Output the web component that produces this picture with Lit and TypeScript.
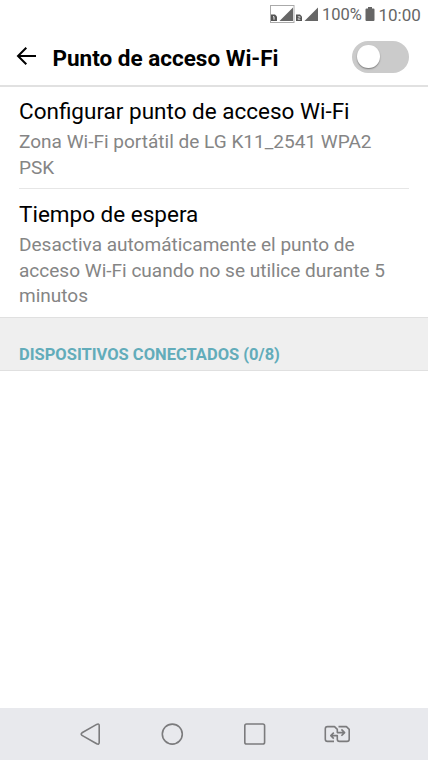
import { LitElement, html, css, svg } from 'lit';
import { customElement, property } from 'lit/decorators.js';

@customElement('status-bar')
export class StatusBar extends LitElement {
  @property({ type: String }) battery = '100%';
  @property({ type: String }) time = '10:00';

  static styles = css`
    :host {
      display: flex;
      height: 30px;
      color: #666;
      font-size: 16.5px;
      line-height: 30px;
    }

    .signals {
      display: block;
      margin-left: 269px;
      width: 50px;
      height: 30px;
    }

    .percent {
      width: 39px;
      margin-left: 3px;
      white-space: nowrap;
    }

    .battery {
      display: block;
      width: 10px;
      height: 30px;
      margin-left: 4px;
    }

    .time {
      margin-left: 3.5px;
      font-size: 17px;
    }
  `;

  signal(x: number, sim: string) {
    return svg`
      <path d="M${x + 8.5} 21 L${x + 22} 7.5 V21 Z" fill="#666" />
      <path d="M${x} 21 V14.5 H${x + 4} L${x + 6} 16.5 V21 Z" fill="#555" />
      ${sim === '1'
        ? svg`<path d="M${x + 2} 16.7 h1 v3" fill="none" stroke="#eee" stroke-width="1" />`
        : svg`<path d="M${x + 1.8} 16.5 h2.2 v1.5 h-1.8 v1.5 h2.2" fill="none" stroke="#ddd" stroke-width=".7" />`}
    `;
  }

  render() {
    return html`
      <svg class="signals" viewBox="269 0 50 30">
        <rect x="270.5" y="5.5" width="23.5" height="17" fill="#fff" stroke="#aaa" />
        ${this.signal(271, '1')}
        ${this.signal(296, '2')}
      </svg>
      <span class="percent">${this.battery}</span>
      <svg class="battery" viewBox="0 0 10 30">
        <path d="M3 7 H7 V8.5 H8.5 Q9.5 8.5 9.5 9.5 V20 Q9.5 21 8.5 21 H1.5 Q.5 21 .5 20 V9.5 Q.5 8.5 1.5 8.5 H3 Z" fill="#666" />
      </svg>
      <span class="time">${this.time}</span>
    `;
  }
}

@customElement('toggle-switch')
export class ToggleSwitch extends LitElement {
  @property({ type: Boolean, reflect: true }) checked = false;

  static styles = css`
    :host {
      display: flex;
      align-items: center;
      box-sizing: border-box;
      width: 57px;
      height: 32px;
      padding: 0 5px;
      border-radius: 16px;
      background: #cbcbcb;
    }

    :host([checked]) {
      justify-content: flex-end;
      background: #5fadbb;
    }

    .thumb {
      width: 22.5px;
      height: 22.5px;
      border-radius: 50%;
      background: #fff;
      box-shadow: 0 1px 1.5px rgba(0, 0, 0, 0.4);
    }
  `;

  render() {
    return html`<div class="thumb"></div>`;
  }
}

@customElement('setting-row')
export class SettingRow extends LitElement {
  @property({ type: String }) heading = '';
  @property({ type: String }) summary = '';

  static styles = css`
    :host {
      display: block;
      padding: 10px 19px 8px;
    }

    .heading {
      color: #000;
      font-size: 22.5px;
      line-height: 28px;
      white-space: nowrap;
    }

    .summary {
      margin-top: 4px;
      color: #858585;
      font-size: 19.05px;
      line-height: 25.6px;
    }
  `;

  render() {
    return html`
      <div class="heading">${this.heading}</div>
      <div class="summary">${this.summary}</div>
    `;
  }
}

@customElement('nav-bar')
export class NavBar extends LitElement {
  static styles = css`
    :host {
      display: block;
      height: 52px;
      background: #e8e9ed;
    }

    svg {
      display: block;
      fill: none;
      stroke: #7b7b7d;
      stroke-width: 1.6;
      stroke-linejoin: round;
    }
  `;

  render() {
    return html`
      <svg width="428" height="52" viewBox="0 708 428 52">
        <path d="M82 732.8 L96.7 724.4 Q99.2 723.3 99.2 725.6 V742.6 Q99.2 744.9 96.7 743.8 L82 735.4 Q80.4 734.1 82 732.8 Z" />
        <circle cx="172.3" cy="734.1" r="10" />
        <rect x="244.8" y="724" width="19.8" height="20" rx="1.8" />
        <path d="M334 741.4 H327.5 Q325.3 741.4 325.3 739.2 V728.8 Q325.3 726.6 327.5 726.6 H334.5 L337.3 729.4 V732.6 H344 M341.4 729.4 L344.6 732.6 L341.4 735.8" />
        <path d="M338.5 726.6 H346.4 L349.2 729.4 V739.2 Q349.2 741.4 347 741.4 H339.5 Q337.3 741.4 337.3 739.2 V735.6 H330.8 M333.8 732.6 L330.8 735.6 L333.8 738.6" />
      </svg>
    `;
  }
}

@customElement('app-root')
export class AppRoot extends LitElement {
  static styles = css`
    :host {
      display: flex;
      flex-direction: column;
      width: 428px;
      height: 760px;
      overflow: hidden;
      background: #fff;
      font-family: Roboto, 'Liberation Sans', sans-serif;
    }

    .header {
      display: flex;
      align-items: center;
      box-sizing: border-box;
      height: 57px;
      padding: 0 19px 2px 16px;
      border-bottom: 2px solid #e1e1e1;
    }

    .back {
      display: block;
      margin-bottom: 1px;
      fill: none;
      stroke: #000;
      stroke-width: 2;
    }

    h1 {
      flex: 1;
      margin: 3px 0 0 15.5px;
      font-size: 22.5px;
      font-weight: 700;
      line-height: 28px;
      white-space: nowrap;
    }

    .divider {
      height: 1px;
      margin: 0 19px 1px;
      background: #e6e6e6;
    }

    .category {
      box-sizing: border-box;
      height: 54px;
      padding: 26px 19px 0;
      border: solid #e0e0e0;
      border-width: 1px 0;
      background: #efefef;
      color: #62acba;
      font-size: 16.5px;
      font-weight: 700;
      line-height: 22px;
    }

    .devices {
      flex: 1;
    }
  `;

  render() {
    return html`
      <status-bar battery="100%" time="10:00"></status-bar>
      <div class="header">
        <svg class="back" width="21" height="20" viewBox="0 0 21 20">
          <path d="M20 10 H2 M10.3 1.7 L2 10 L10.3 18.3" />
        </svg>
        <h1>Punto de acceso Wi-Fi</h1>
        <toggle-switch></toggle-switch>
      </div>
      <setting-row
        heading="Configurar punto de acceso Wi-Fi"
        summary="Zona Wi-Fi portátil de LG K11_2541 WPA2 PSK"
      ></setting-row>
      <div class="divider"></div>
      <setting-row
        heading="Tiempo de espera"
        summary="Desactiva automáticamente el punto de acceso Wi-Fi cuando no se utilice durante 5 minutos"
      ></setting-row>
      <div class="category">DISPOSITIVOS CONECTADOS (0/8)</div>
      <div class="devices"></div>
      <nav-bar></nav-bar>
    `;
  }
}
